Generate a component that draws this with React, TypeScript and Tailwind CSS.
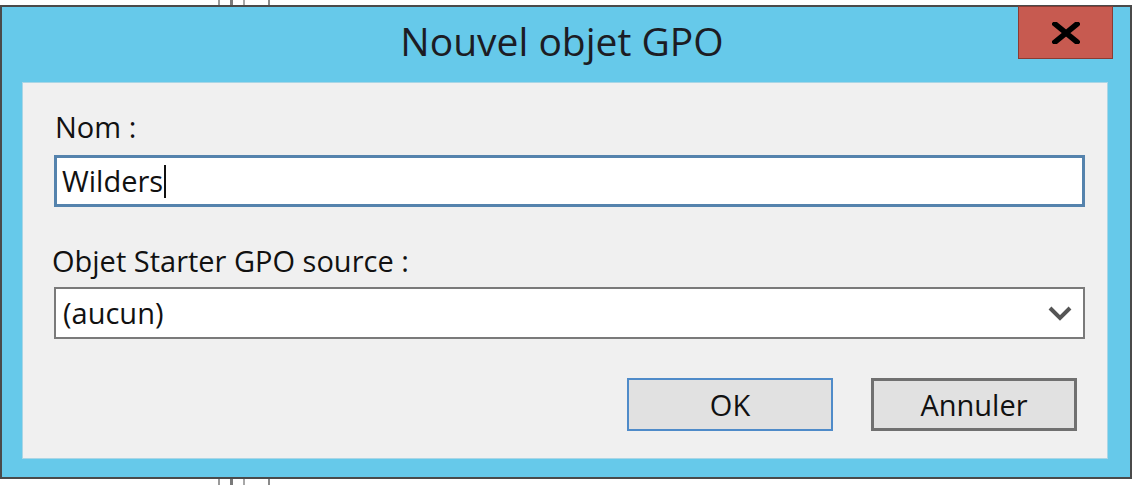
import React from "react";

function Lines() {
  return (
    <div className="flex h-full">
      <div className="w-[218px]" />
      <div className="w-[2px] bg-[#9a9a9a]" />
      <div className="w-[10px]" />
      <div className="w-[3px] bg-[#7a7a7a]" />
      <div className="w-[10px]" />
      <div className="w-[2px] bg-[#a8a8a8]" />
      <div className="w-[23px]" />
      <div className="w-[2px] bg-[#8a8a8a]" />
    </div>
  );
}

export default function App() {
  return (
    <div
      className="w-[1132px] h-[485px] bg-white flex flex-col overflow-hidden"
      style={{ fontFamily: '"Open Sans", "Noto Sans", sans-serif' }}
    >
      <div className="h-[5px] shrink-0">
        <Lines />
      </div>
      <div className="h-[474px] shrink-0 border-2 border-[#4a4a4a] bg-[#66c9ea] flex flex-col">
        <div className="relative h-[75px] shrink-0 flex items-center justify-center">
          <span className="text-[39px] leading-[46px] text-[#1c1c24] mt-[-8px] ml-[-8px]">
            Nouvel objet GPO
          </span>
          <div className="absolute right-[17px] top-[-1px] w-[95px] h-[53px] bg-[#c75a50] border border-[#8a3b33] flex items-center justify-center">
            <svg width="28" height="22" viewBox="0 0 28 22">
              <path d="M3 2 L25 20 M25 2 L3 20" stroke="#000" strokeWidth="5.5" strokeLinecap="square" />
            </svg>
          </div>
        </div>
        <div className="flex-1 flex pl-[20px] pr-[22px]">
          <div className="flex-1 bg-[#f0f0f0] border border-[#a9d6e6] pl-[31px] pt-[26px] flex flex-col">
            <div className="text-[29px] leading-[36px] text-[#111] ml-[1px]">Nom :</div>
            <div className="mt-[10px] w-[1031px] h-[52px] bg-white border-[3px] border-[#5583ad] flex items-center pl-[5px]">
              <span className="text-[29px] leading-[36px] text-[#111]">Wilders</span>
              <div className="w-[2px] h-[33px] bg-[#111] ml-[1px]" />
            </div>
            <div className="mt-[36px] text-[29px] leading-[36px] text-[#111] ml-[-2px]">
              Objet Starter GPO source :
            </div>
            <div className="mt-[8px] w-[1031px] h-[52px] bg-white border-2 border-[#7a7a7a] flex items-center justify-between pl-[7px] pr-[11px]">
              <span className="text-[29px] leading-[36px] text-[#111]">(aucun)</span>
              <svg width="24" height="17" viewBox="0 0 24 17">
                <path d="M2 3 L12 13 L22 3" stroke="#555" strokeWidth="4" fill="none" />
              </svg>
            </div>
            <div className="mt-[39px] flex gap-[38px] pl-[573px]">
              <div className="w-[206px] h-[53px] bg-[#e1e1e1] border-2 border-[#4f8bc9] flex items-center justify-center text-[29px] text-[#111]">
                OK
              </div>
              <div className="w-[206px] h-[53px] bg-[#e1e1e1] border-[3px] border-[#707070] flex items-center justify-center text-[29px] text-[#111]">
                Annuler
              </div>
            </div>
          </div>
        </div>
        <div className="h-[18px] shrink-0" />
      </div>
      <div className="h-[6px] shrink-0">
        <Lines />
      </div>
    </div>
  );
}
